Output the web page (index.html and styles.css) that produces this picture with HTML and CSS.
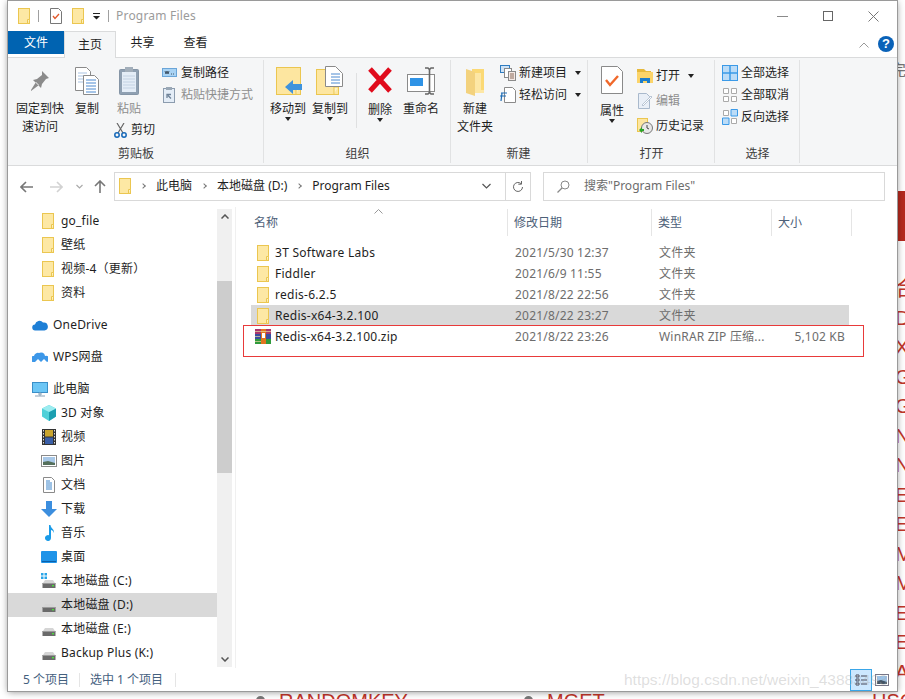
FILE: index.html
```html
<!DOCTYPE html>
<html lang="zh">
<head>
<meta charset="utf-8">
<title>Program Files</title>
<link rel="stylesheet" href="styles.css">
</head>
<body>

<svg class="defs" width="0" height="0">
  <symbol id="folder" viewBox="0 0 12 16">
    <rect x=".5" y=".5" width="11" height="15" fill="#fde8a4" stroke="#ebc650"/>
    <path d="M9.5 15.5v-4h2" fill="#fdf3c8" stroke="#ebc650"/>
  </symbol>
  <symbol id="disk" viewBox="0 0 16 16">
    <path d="M2 8l2-3h8l2 3z" fill="#d5d5d5"/>
    <rect x="1.5" y="8" width="13" height="5" fill="#6a6a6a"/>
    <rect x="1.5" y="8" width="13" height="1" fill="#9a9a9a"/>
    <rect x="11" y="10" width="2" height="1.4" fill="#4ade3a"/>
  </symbol>
</svg>

<div class="backdrop">
  <div class="backdrop-bar"></div>
  <span class="backdrop-grey">完</span>
  <div class="backdrop-letters">
    <span>合</span><span>D</span><span>X</span><span>G</span><span>G</span><span>N</span><span>N</span>
    <span>E</span><span>E</span><span>M</span><span>M</span><span>E</span><span>E</span><span>A</span>
  </div>
  <div class="backdrop-bottom">
    <i class="dot dot-1"></i><span class="word word-1">RANDOMKEY</span>
    <i class="dot dot-2"></i><span class="word word-2">MGET</span>
    <span class="word word-3">HSC</span>
  </div>
</div>

<div class="window">

  <div class="titlebar">
    <svg class="qa-folder" width="12" height="16"><use href="#folder"/></svg>
    <i class="qa-sep"></i>
    <svg class="qa-doc" width="12" height="16" viewBox="0 0 12 16">
      <path d="M.5.5h8l3 3v12h-11z" fill="#fff" stroke="#777"/>
      <path d="M3 8l2 2.500 4-4.500" fill="none" stroke="#e2582a" stroke-width="1.300"/>
    </svg>
    <svg class="qa-folder2" width="12" height="16"><use href="#folder"/></svg>
    <svg class="qa-drop" width="7" height="7" viewBox="0 0 7 7">
      <path d="M0 0h7v1H0zM0 3h7L3.500 6.500z" fill="#222"/>
    </svg>
    <i class="qa-sep"></i>
    <span class="title">Program Files</span>
    <div class="winbtns">
      <svg width="11" height="11" viewBox="0 0 11 11"><path d="M0 5.500h11" stroke="#8a8a8a"/></svg>
      <svg width="10" height="10" viewBox="0 0 10 10"><rect x=".5" y=".5" width="9" height="9" fill="none" stroke="#666"/></svg>
      <svg width="11" height="11" viewBox="0 0 11 11"><path d="M.5.500l10 10M10.500.500l-10 10" stroke="#777"/></svg>
    </div>
  </div>

  <div class="tabs">
    <div class="tab tab-file">文件</div>
    <div class="tab tab-on">主页</div>
    <div class="tab tab-share">共享</div>
    <div class="tab tab-view">查看</div>
    <svg class="collapse" width="10" height="6" viewBox="0 0 10 6"><path d="M.5 5.500L5 1l4.500 4.500" fill="none" stroke="#999"/></svg>
    <div class="help">?</div>
  </div>

  <div class="ribbon">

    <div class="group g-clip">
      <div class="group-body">
        <div class="big w-pin">
          <svg width="24" height="30" viewBox="0 0 24 30">
            <path d="M14 5l7 7-3 1-4 5-1 4-8-8 4-1 5-4zM8 16l-5 8 0 1 8-6z" fill="#8b8b8b"/>
          </svg>
          <span>固定到快<br>速访问</span>
        </div>
        <div class="big w-copy">
          <svg width="26" height="30" viewBox="0 0 26 30">
            <path d="M1.500 1.500h11l4 4v19h-15z" fill="#fff" stroke="#8a8a8a"/>
            <path d="M4 7h9M4 10h9M4 13h9M4 16h9" stroke="#a9c3e2"/>
            <path d="M9.500 9.500h11l4 4v15h-15z" fill="#fff" stroke="#8a8a8a"/>
            <path d="M12 14h10M12 17h10M12 20h10M12 23h10M12 26h10" stroke="#4d8ad0"/>
          </svg>
          <span>复制</span>
        </div>
        <div class="paste-col">
          <div class="big w-paste is-off">
            <svg width="22" height="30" viewBox="0 0 22 30">
              <rect x="1.500" y="3.500" width="19" height="25" rx="1" fill="#8fa0b2" stroke="#8595a6"/>
              <rect x="4" y="6" width="14" height="20" fill="#e4edf7"/>
              <path d="M5 10h12M5 13h12M5 16h12M5 19h12M5 22h12" stroke="#c3d2e3"/>
              <rect x="7" y="1" width="8" height="5" fill="#a2aeba"/>
            </svg>
            <span>粘贴</span>
          </div>
          <div class="small cut">
            <svg width="13" height="15" viewBox="0 0 13 15">
              <path d="M3 0l6 10M10 0L4 10" stroke="#666" stroke-width="1.200" fill="none"/>
              <circle cx="3" cy="12" r="2.200" fill="none" stroke="#1668b8" stroke-width="1.500"/>
              <circle cx="10" cy="12" r="2.200" fill="none" stroke="#1668b8" stroke-width="1.500"/>
            </svg>
            <span>剪切</span>
          </div>
        </div>
        <div class="small-col col-clip">
          <div class="small">
            <svg width="15" height="10" viewBox="0 0 15 10">
              <rect x=".5" y=".5" width="14" height="8" fill="#a9d3f4" stroke="#6aa5d8"/>
              <path d="M3 3l1 3 1-3 1 3 1-3M9 6h1M11 6h1" stroke="#2b3a4a" fill="none" stroke-width=".8"/>
            </svg>
            <span>复制路径</span>
          </div>
          <div class="small is-off">
            <svg width="15" height="16" viewBox="0 0 15 16">
              <rect x="1.500" y="1.500" width="11" height="14" fill="#e4edf7" stroke="#8c9cae"/>
              <rect x="4" y="0" width="6" height="3" fill="#9aa8b6"/>
              <path d="M5 11V7.500h4M6 8.500l3 3" stroke="#6e8298" fill="none" stroke-width="1.300"/>
            </svg>
            <span>粘贴快捷方式</span>
          </div>
        </div>
      </div>
      <div class="group-label">剪贴板</div>
    </div>

    <div class="group g-org">
      <div class="group-body">
        <div class="big w-move">
          <svg width="28" height="30" viewBox="0 0 28 30">
            <rect x="2.500" y="1.500" width="24" height="27" fill="#fde6a0" stroke="#ebc650"/>
            <path d="M22 28v-7h4" fill="#fdf3c8" stroke="#ebc650"/>
            <path d="M11 21l8-7v4h9v6h-9v4z" fill="#3f93dc"/>
          </svg>
          <span>移动到</span>
          <i class="caret"></i>
        </div>
        <div class="big w-copyto">
          <svg width="28" height="30" viewBox="0 0 28 30">
            <rect x=".5" y="3.500" width="22" height="25" fill="#fde6a0" stroke="#ebc650"/>
            <path d="M18 28v-7h4" fill="#fdf3c8" stroke="#ebc650"/>
            <path d="M9.500.500h10l7 7v13h-17z" fill="#fff" stroke="#8a8a8a"/>
            <path d="M15 8h9M15 11h9M15 14h9M15 17h9" stroke="#4d8ad0"/>
          </svg>
          <span>复制到</span>
          <i class="caret"></i>
        </div>
        <i class="inner-sep"></i>
        <div class="big w-del">
          <svg width="26" height="30" viewBox="0 0 26 30">
            <path d="M3 3l20 22M23 3L3 25" stroke="#e00b1c" stroke-width="5" fill="none"/>
          </svg>
          <span class="low">删除</span>
          <i class="caret"></i>
        </div>
        <div class="big w-ren">
          <svg width="28" height="30" viewBox="0 0 28 30">
            <rect x=".5" y="8.500" width="27" height="17" fill="#fff" stroke="#8a8a8a"/>
            <rect x="3" y="12" width="13" height="8" fill="#2f93e6"/>
            <path d="M18 2h3l1.500 1.500L24 2h3M22.500 3v24M18 28h3l1.500-1.500L24 28h3" stroke="#666" stroke-width="1.600" fill="none"/>
          </svg>
          <span>重命名</span>
        </div>
      </div>
      <div class="group-label">组织</div>
    </div>

    <div class="group g-new">
      <div class="group-body">
        <div class="big w-newf">
          <svg width="20" height="30" viewBox="0 0 20 30">
            <path d="M7 3h12v21H7z" fill="#fbd975"/>
            <path d="M1 3l9 3v24l-9-3z" fill="#f3d27e"/>
            <path d="M10 7v20h9v-3h-3v-17z" fill="#fde7a5"/>
          </svg>
          <span>新建<br>文件夹</span>
        </div>
        <div class="small-col col-new">
          <div class="small">
            <svg width="16" height="16" viewBox="0 0 16 16">
              <rect x=".5" y=".5" width="9" height="7" fill="#cfe3f6" stroke="#2f7cc0"/>
              <rect x="4.500" y="3.500" width="7" height="9" fill="#fff" stroke="#8a8a8a"/>
              <rect x="8.500" y="6.500" width="7" height="9" fill="#f4e9e4" stroke="#8a8a8a"/>
              <path d="M10 9h4M10 11h4M10 13h4" stroke="#8a6a5a"/>
            </svg>
            <span>新建项目</span><i class="caret caret-side"></i>
          </div>
          <div class="small">
            <svg width="16" height="16" viewBox="0 0 16 16">
              <path d="M4.500.500h8l3 3v12h-11z" fill="#fff" stroke="#8a8a8a"/>
              <path d="M1 6h6M0 9h6M2 6l-1 8" stroke="#1f6db5" stroke-width="1.200" fill="none"/>
            </svg>
            <span>轻松访问</span><i class="caret caret-side"></i>
          </div>
        </div>
      </div>
      <div class="group-label label-new">新建</div>
    </div>

    <div class="group g-open">
      <div class="group-body">
        <div class="big w-prop">
          <svg width="22" height="30" viewBox="0 0 22 30">
            <path d="M.5.500h16l5 5v22h-21z" fill="#fff" stroke="#8a8a8a"/>
            <path d="M5 14l4 5 8-9" fill="none" stroke="#f0682a" stroke-width="2.400"/>
          </svg>
          <span class="lower">属性</span>
          <i class="caret"></i>
        </div>
        <div class="small-col col-open">
          <div class="small">
            <svg width="16" height="14" viewBox="0 0 16 14">
              <path d="M0 0h7l2 2h5v2H0z" fill="#e6b93c"/>
              <path d="M0 3h16v11H0z" fill="#fbd46a"/>
              <path d="M3 14V9h10v5h-3v-2H6v2z" fill="#1d7dcb"/>
            </svg>
            <span>打开</span><i class="caret caret-side"></i>
          </div>
          <div class="small is-off">
            <svg width="16" height="16" viewBox="0 0 16 16">
              <path d="M1.500.500h8l3 3v12h-11z" fill="#e9eff7" stroke="#a9b9cc"/>
              <path d="M5 12l9-9 1 1-9 9z" fill="#fff" stroke="#a9b9cc" stroke-width=".8"/>
            </svg>
            <span>编辑</span>
          </div>
          <div class="small">
            <svg width="16" height="16" viewBox="0 0 16 16">
              <rect x=".5" y=".5" width="10" height="13" fill="#fde6a0" stroke="#ebc650"/>
              <circle cx="10" cy="10" r="5.500" fill="#e8e8e8" stroke="#777"/>
              <path d="M10 7v3l2 1" stroke="#444" fill="none"/>
              <path d="M2 12l3-3v2h2v2H5v2z" fill="#2aa52a"/>
            </svg>
            <span>历史记录</span>
          </div>
        </div>
      </div>
      <div class="group-label">打开</div>
    </div>

    <div class="group g-sel">
      <div class="group-body">
        <div class="small-col col-sel">
          <div class="small">
            <svg width="16" height="16" viewBox="0 0 16 16">
              <rect x=".5" y=".5" width="15" height="15" fill="#bcdcf7" stroke="#3b9ae8"/>
              <path d="M8 0v16M0 8h16" stroke="#3b9ae8" stroke-width="1.500"/>
            </svg>
            <span>全部选择</span>
          </div>
          <div class="small">
            <svg width="16" height="16" viewBox="0 0 16 16">
              <path d="M1.500 1.500h5v5h-5zM9.500 1.500h5v5h-5zM1.500 9.500h5v5h-5zM9.500 9.500h5v5h-5z" fill="#fff" stroke="#aaa"/>
            </svg>
            <span>全部取消</span>
          </div>
          <div class="small">
            <svg width="16" height="16" viewBox="0 0 16 16">
              <path d="M1.500 1.500h5v5h-5zM9.500 9.500h5v5h-5z" fill="#fff" stroke="#aaa"/>
              <path d="M9 .5h6.500V7H9zM.5 9H7v6.500H.5z" fill="#bcdcf7" stroke="#3b9ae8"/>
            </svg>
            <span>反向选择</span>
          </div>
        </div>
      </div>
      <div class="group-label">选择</div>
    </div>
  </div>

  <div class="addressbar">
    <svg class="nav-back" width="13" height="12" viewBox="0 0 13 12"><path d="M6 1L1 6l5 5M1 6h12" fill="none" stroke="#777" stroke-width="1.600"/></svg>
    <svg class="nav-fwd" width="13" height="12" viewBox="0 0 13 12"><path d="M7 1l5 5-5 5M12 6H0" fill="none" stroke="#d2d2d2" stroke-width="1.600"/></svg>
    <svg class="nav-down" width="7" height="5" viewBox="0 0 7 5"><path d="M.5 1l3 3 3-3" fill="none" stroke="#aaa" stroke-width="1.200"/></svg>
    <svg class="nav-up" width="12" height="13" viewBox="0 0 12 13"><path d="M1 6l5-5 5 5M6 1v12" fill="none" stroke="#777" stroke-width="1.600"/></svg>
    <div class="path">
      <svg class="path-folder" width="12" height="16"><use href="#folder"/></svg>
      <i class="crumb-sep"></i><span>此电脑</span>
      <i class="crumb-sep"></i><span>本地磁盘 (D:)</span>
      <i class="crumb-sep"></i><span>Program Files</span>
      <svg class="path-drop" width="9" height="6" viewBox="0 0 9 6"><path d="M.5 1l4 4 4-4" fill="none" stroke="#555" stroke-width="1.200"/></svg>
    </div>
    <div class="refresh">
      <svg width="12" height="12" viewBox="0 0 12 12"><path d="M10.500 6A4.500 4.500 0 1 1 9 2.600M9.500 0v3.200H6.300" fill="none" stroke="#666"/></svg>
    </div>
    <div class="search">
      <svg width="13" height="13" viewBox="0 0 13 13"><circle cx="8" cy="5" r="4" fill="none" stroke="#888"/><path d="M5 8l-4.500 4.500" stroke="#888" stroke-width="1.300"/></svg>
      <span>搜索"Program Files"</span>
    </div>
  </div>

  <div class="main">
    <div class="nav">
      <div class="nav-row sub"><svg class="nf" width="12" height="16"><use href="#folder"/></svg><span>go_file</span></div>
      <div class="nav-row sub"><svg class="nf" width="12" height="16"><use href="#folder"/></svg><span>壁纸</span></div>
      <div class="nav-row sub"><svg class="nf" width="12" height="16"><use href="#folder"/></svg><span>视频-4（更新）</span></div>
      <div class="nav-row sub"><svg class="nf" width="12" height="16"><use href="#folder"/></svg><span>资料</span></div>

      <div class="nav-row top gap">
        <svg width="16" height="12" viewBox="0 0 16 12"><path d="M3.500 11.500a3 3 0 0 1-.5-6A4.500 4.500 0 0 1 11 3.500a3.500 3.500 0 0 1 1.500 8z" fill="#1e7fd6"/></svg>
        <span>OneDrive</span>
      </div>
      <div class="nav-row top gap">
        <svg width="16" height="12" viewBox="0 0 16 12"><path d="M1 11a3 3 0 0 1 1-6 4 4 0 0 1 5-3 4 4 0 0 1 6 3 3 3 0 0 1 2 6l-3-3-3 3-3-3-3 3z" fill="#3c97e8"/></svg>
        <span>WPS网盘</span>
      </div>
      <div class="nav-row top gap">
        <svg width="16" height="15" viewBox="0 0 16 15"><rect x=".5" y=".5" width="15" height="10" fill="#6cc6f5" stroke="#3a8fc8"/><path d="M7 11h2v2H7zM3 14h10" stroke="#8aa3b8" fill="none"/></svg>
        <span>此电脑</span>
      </div>
      <div class="nav-row sub">
        <svg width="16" height="16" viewBox="0 0 16 16"><path d="M8 0l7 3.500v8L8 16l-7-4.500v-8z" fill="#4fd0d8"/><path d="M8 7l7-3.500v8L8 16z" fill="#1c9fb0"/><path d="M8 0l7 3.500L8 7 1 3.500z" fill="#9cecf0"/></svg>
        <span>3D 对象</span>
      </div>
      <div class="nav-row sub">
        <svg width="16" height="16" viewBox="0 0 16 16"><rect x="1" y="0" width="14" height="16" fill="#333"/><rect x="4" y="1" width="8" height="6.500" fill="#c9a52e"/><rect x="4" y="8.500" width="8" height="6.500" fill="#3a5fa8"/><path d="M2.500 1v14M13.500 1v14" stroke="#ddd" stroke-dasharray="1.500 1.500"/></svg>
        <span>视频</span>
      </div>
      <div class="nav-row sub">
        <svg width="16" height="14" viewBox="0 0 16 14"><rect x=".5" y="1.500" width="15" height="11" fill="#fff" stroke="#8a8a8a"/><rect x="2" y="3" width="12" height="8" fill="#a8c8e8"/><path d="M2 11V8l5-1 7 2v2z" fill="#55705c"/></svg>
        <span>图片</span>
      </div>
      <div class="nav-row sub">
        <svg width="16" height="16" viewBox="0 0 16 16"><path d="M2.500.500h8l3 3v12h-11z" fill="#fff" stroke="#8a8a8a"/><path d="M5 4h4M5 6h6M5 8h6M5 10h6M5 12h6" stroke="#3c86cc"/></svg>
        <span>文档</span>
      </div>
      <div class="nav-row sub">
        <svg width="16" height="16" viewBox="0 0 16 16"><path d="M5 0h6v8h5l-8 8-8-8h5z" fill="#3c8ede"/></svg>
        <span>下载</span>
      </div>
      <div class="nav-row sub">
        <svg width="16" height="16" viewBox="0 0 16 16"><path d="M8 0h1.500c0 3 4 4 3.500 8-.5-2-2-3-3-3v8a3 3 0 1 1-2-2.800z" fill="#1a9be8"/></svg>
        <span>音乐</span>
      </div>
      <div class="nav-row sub">
        <svg width="16" height="14" viewBox="0 0 16 14"><rect x="0" y="1" width="16" height="12" rx="1" fill="#1e93e8"/><path d="M1 11.500h14" stroke="#0c5fa8"/></svg>
        <span>桌面</span>
      </div>
      <div class="nav-row sub">
        <svg width="16" height="16" viewBox="0 0 16 16"><path d="M0 0h2.500v2.500H0zM3.500 0H6v2.500H3.500zM0 3.500h2.500V6H0zM3.500 3.500H6V6H3.500z" fill="#2aa5e8"/><use href="#disk" y="2"/></svg>
        <span>本地磁盘 (C:)</span>
      </div>
      <div class="nav-row sub is-on"><svg width="16" height="16"><use href="#disk" y="2"/></svg><span>本地磁盘 (D:)</span></div>
      <div class="nav-row sub"><svg width="16" height="16"><use href="#disk" y="2"/></svg><span>本地磁盘 (E:)</span></div>
      <div class="nav-row sub"><svg width="16" height="16"><use href="#disk" y="2"/></svg><span>Backup Plus (K:)</span></div>
    </div>

    <div class="scroll">
      <svg class="scroll-arrow" width="8" height="5" viewBox="0 0 8 5"><path d="M.5 4.500L4 1l3.500 3.500" fill="none" stroke="#555" stroke-width="1.500"/></svg>
      <div class="thumb"></div>
      <svg class="scroll-arrow arrow-end" width="8" height="5" viewBox="0 0 8 5"><path d="M.5.500L4 4 7.500.500" fill="none" stroke="#555" stroke-width="1.500"/></svg>
    </div>

    <div class="files">
      <div class="file-head">
        <div class="hcell h-name">名称
          <svg class="sort" width="9" height="5" viewBox="0 0 9 5"><path d="M.5 4.500l4-4 4 4" fill="none" stroke="#999"/></svg>
        </div>
        <div class="hcell h-date">修改日期</div>
        <div class="hcell h-type">类型</div>
        <div class="hcell h-size">大小</div>
      </div>
      <div class="file-row">
        <div class="f-name"><svg width="12" height="16"><use href="#folder"/></svg>3T Software Labs</div>
        <div class="f-meta">2021/5/30 12:37</div><div class="f-meta">文件夹</div><div></div>
      </div>
      <div class="file-row">
        <div class="f-name"><svg width="12" height="16"><use href="#folder"/></svg>Fiddler</div>
        <div class="f-meta">2021/6/9 11:55</div><div class="f-meta">文件夹</div><div></div>
      </div>
      <div class="file-row">
        <div class="f-name"><svg width="12" height="16"><use href="#folder"/></svg>redis-6.2.5</div>
        <div class="f-meta">2021/8/22 22:56</div><div class="f-meta">文件夹</div><div></div>
      </div>
      <div class="file-row is-on">
        <div class="f-name"><svg width="12" height="16"><use href="#folder"/></svg>Redis-x64-3.2.100</div>
        <div class="f-meta">2021/8/22 23:27</div><div class="f-meta">文件夹</div><div></div>
      </div>
      <div class="file-row">
        <div class="f-name rar">
          <svg width="16" height="15" viewBox="0 0 16 15">
            <rect x="0" y="0" width="16" height="5" fill="#a8366c"/>
            <rect x="0" y="5" width="16" height="5" fill="#3b4da0"/>
            <rect x="0" y="10" width="16" height="5" fill="#2f9a3c"/>
            <rect x="6" y="0" width="5" height="15" fill="#e2741f"/>
            <rect x="7" y="4" width="3" height="5" fill="#fff"/>
            <path d="M0 2.500h16M0 7.500h5M0 12.500h6" stroke="#e8d9a0" stroke-width=".7"/>
          </svg>
          Redis-x64-3.2.100.zip
        </div>
        <div class="f-meta">2021/8/22 23:26</div><div class="f-meta">WinRAR ZIP 压缩...</div><div class="f-meta f-size">5,102 KB</div>
      </div>
      <div class="mark"></div>
    </div>
  </div>

  <div class="statusbar">
    <span class="stat stat-1">5 个项目</span>
    <span class="stat stat-2">选中 1 个项目</span>
    <div class="views">
      <div class="view-btn is-on">
        <svg width="14" height="14" viewBox="0 0 14 14"><path d="M2 2h3v2H2zM2 6h3v2H2zM2 10h3v2H2zM7 3h6M7 7h6M7 11h6" fill="none" stroke="#445" stroke-width="1"/></svg>
      </div>
      <div class="view-btn">
        <svg width="14" height="12" viewBox="0 0 14 12"><rect x=".5" y=".5" width="13" height="11" fill="#fff" stroke="#778"/><rect x="2" y="2" width="10" height="8" fill="#9cc3e8"/><path d="M2 10V7l4-1 6 2v2z" fill="#456"/></svg>
      </div>
    </div>
  </div>
</div>

<div class="watermark">https://blog.csdn.net/weixin_43883493</div>

</body>
</html>
```

FILE: styles.css
```css
* { box-sizing: border-box; }
html, body { margin: 0; height: 100%; }
body {
  width: 905px; height: 699px; overflow: hidden; position: relative; background: #fff;
  font-family: "Noto Sans", "Noto Sans CJK SC", sans-serif; font-size: 12px; color: #1e1e1e; line-height: 18px;
}
svg { display: block; flex: none; }
.defs { position: absolute; }
i { display: block; font-style: normal; }

/* what shows around the window */
.backdrop { position: absolute; inset: 0; overflow: hidden; font-family: "Liberation Sans", "Noto Sans CJK SC", sans-serif; color: #c2362b; }
.backdrop-bar { position: absolute; left: 890px; top: 191px; width: 15px; height: 50px; background: #b5291e; }
.backdrop-grey { position: absolute; left: 890px; top: 62px; font-size: 16px; color: #777; }
.backdrop-letters { position: absolute; left: 895px; top: 276px; display: flex; flex-direction: column; gap: 5.500px; font-size: 21px; line-height: 24px; }
.backdrop-bottom { position: absolute; left: 0; right: 0; bottom: 0; height: 8px; }
.word { position: absolute; top: -1px; font-size: 20px; line-height: 23px; }
.word-1 { left: 279px; }
.word-2 { left: 547px; }
.word-3 { left: 872px; }
.dot { position: absolute; top: 5px; width: 9px; height: 9px; border-radius: 50%; background: #777; }
.dot-1 { left: 256px; }
.dot-2 { left: 524px; }

.window {
  position: relative; margin: 1px 0 0 8px; width: 889px; height: 690px; background: #fff;
  display: flex; flex-direction: column;
  box-shadow: 0 0 0 1px #9a9a9a, 0 1px 7px rgba(0, 0, 0, .45);
}

/* title bar */
.titlebar { height: 30px; flex: none; display: flex; align-items: center; padding-left: 10px; }
.qa-sep { width: 1px; height: 12px; background: #a0a0a0; margin-left: 8px; }
.qa-doc { margin-left: 11px; }
.qa-folder2 { margin-left: 10px; }
.qa-drop { margin-left: 9px; }
.title { margin-left: 7px; color: #9b9b9b; letter-spacing: .2px; }
.winbtns { margin-left: auto; display: flex; align-items: center; padding-right: 18px; gap: 35px; }

/* tabs */
.tabs { height: 27px; flex: none; display: flex; position: relative; border-bottom: 1px solid #dadbdc; }
.tab { display: flex; align-items: center; justify-content: center; height: 23px; }
.tab-file { width: 56px; background: #0063b1; color: #fff; }
.tab-on { width: 52px; height: 27px; background: #f5f6f7; border: 1px solid #dadbdc; border-bottom: 0; z-index: 1; }
.tab-share { width: 53px; }
.tab-view { width: 53px; }
.collapse { position: absolute; left: 851px; top: 11px; }
.help {
  position: absolute; left: 870px; top: 5px; width: 16px; height: 16px; border-radius: 50%;
  background: #0a62b8; color: #fff; font: bold 13px/16px "Liberation Sans", sans-serif; text-align: center;
}

/* ribbon */
.ribbon { height: 108px; flex: none; display: flex; background: #f5f6f7; border-bottom: 1px solid #dadbdc; }
.group { display: flex; flex-direction: column; position: relative; height: 107px; }
.group::after { content: ""; position: absolute; right: 0; top: 2px; bottom: 2px; width: 1px; background: #e1e2e3; }
.g-clip { width: 256px; }
.g-org { width: 187px; }
.g-new { width: 137px; }
.g-open { width: 127px; }
.g-sel { width: 85px; }
.group-body { flex: 1; display: flex; align-items: flex-start; min-height: 0; }
.group-label { height: 18px; margin-bottom: 2px; text-align: center; color: #3c3c3c; }
.label-new { padding-right: 2px; }

.big { display: flex; flex-direction: column; align-items: center; text-align: center; padding-top: 8px; }
.big > span { margin-top: 4px; }
.big > .low { margin-top: 5px; }
.big > .lower { margin-top: 6px; }
.is-off { color: #8e8e8e; }
.caret { width: 0; height: 0; border: 3px solid transparent; border-top: 4px solid #222; border-bottom: 0; margin-top: -1px; }
.caret-side { margin: 0 0 0 5px; }
.inner-sep { width: 1px; height: 55px; margin: 15px 0 0 5px; background: #dfe0e1; }

.w-pin { width: 48px; margin-left: 8px; }
.w-copy { width: 46px; }
.paste-col { width: 52px; display: flex; flex-direction: column; }
.w-paste { width: 38px; }
.cut { margin: 1px 0 0 4px; }
.col-clip { padding-top: 4px; margin-left: 0; }
.small { height: 22px; display: flex; align-items: center; gap: 4px; white-space: nowrap; }
.small-col { display: flex; flex-direction: column; padding-top: 4px; }

.w-move { width: 42px; margin-left: 3px; }
.w-copyto { width: 42px; }
.w-del { width: 44px; }
.w-ren { width: 38px; }
.w-del { margin-left: 1px; }

.w-newf { width: 48px; }
.col-new { margin-left: 1px; }
.col-new .small { gap: 3px; }

.w-prop { width: 48px; }
.col-open { margin-left: 1px; padding-top: 5px; }
.col-open .small { height: 25px; gap: 3px; }

.col-sel { margin-left: 7px; }
.col-sel .small { gap: 3px; }

/* address bar */
.addressbar { height: 41px; flex: none; display: flex; align-items: center; }
.nav-back { margin-left: 12px; }
.nav-fwd { margin-left: 17px; }
.nav-down { margin-left: 13px; }
.nav-up { margin-left: 11px; }
.path {
  margin-left: 8px; width: 391px; height: 29px; display: flex; align-items: center; padding: 0 0 1px 4px;
  border: 1px solid #d9d9d9; border-right: 0;
}
.crumb-sep { width: 4px; height: 4px; border: solid #777; border-width: 1px 1px 0 0; transform: rotate(45deg); margin: 0 11px 0 10px; }
.path-drop { margin-left: auto; margin-right: 14px; }
.refresh { width: 26px; height: 29px; border: 1px solid #d9d9d9; display: flex; align-items: center; justify-content: center; }
.search {
  margin-left: 12px; width: 342px; height: 29px; border: 1px solid #d9d9d9;
  display: flex; align-items: center; padding: 0 0 1px 13px; gap: 14px; color: #6d6d6d;
}

/* main area */
.main { flex: 1; min-height: 0; display: flex; }
.nav { width: 209px; flex: none; padding-top: 2px; overflow: hidden; }
.nav-row { height: 24px; display: flex; align-items: center; white-space: nowrap; letter-spacing: .2px; }
.sub { padding-left: 33px; gap: 4px; }
.sub > svg { width: 16px; }
.sub > .nf { width: 12px; margin: 0 3px 0 1px; }
.top { padding-left: 24px; gap: 5px; }
.gap { margin-top: 8px; }
.nav-row.is-on { background: #d9d9d9; }

.scroll { width: 15px; flex: none; background: #f0f0f0; margin: 2px 0 1px; display: flex; flex-direction: column; align-items: center; }
.scroll-arrow { margin-top: 5px; }
.thumb { width: 15px; height: 192px; margin-top: 62px; background: #cdcdcd; }
.arrow-end { margin-top: auto; margin-bottom: 5px; }

.files { flex: 1; position: relative; padding: 2px 0 0 15px; border-left: 1px solid #f0f0f0; margin-left: 3px; }
.file-head { display: grid; grid-template-columns: 257px 144px 120px 80px; height: 27px; margin-bottom: 6px; color: #4d6078; }
.hcell { position: relative; display: flex; align-items: center; padding-left: 6px; border-right: 1px solid #e5e5e5; }
.h-name { padding-left: 3px; }
.sort { position: absolute; left: 123px; top: 0; }
.file-row { display: grid; grid-template-columns: 257px 144px 120px 77px; height: 21px; width: 598px; align-items: center; }
.file-row.is-on { background: #d9d9d9; }
.f-name { display: flex; align-items: center; gap: 6px; padding-left: 6px; letter-spacing: .27px; white-space: nowrap; }
.f-name.rar { padding-left: 4px; gap: 4px; letter-spacing: .2px; }
.f-meta { padding-left: 7px; color: #6d6d6d; white-space: nowrap; letter-spacing: .2px; }
.f-size { text-align: right; padding: 0 4px 0 0; }
.mark { position: absolute; left: 7px; top: 118px; width: 621px; height: 32px; border: 1px solid #e83a3a; }

/* status bar */
.statusbar { height: 23px; flex: none; display: flex; align-items: center; padding-left: 15px; color: #44607e; }
.stat { border-right: 1px solid #e5e5e5; height: 14px; display: flex; align-items: center; }
.stat-1 { width: 57px; }
.stat-2 { width: 96px; padding-left: 10px; }
.views { margin-left: auto; display: flex; gap: 3px; padding-right: 8px; align-items: center; }
.view-btn { width: 22px; height: 22px; display: flex; align-items: center; justify-content: center; }
.view-btn.is-on { background: #cce8ff; border: 1px solid #3aa6e8; }
.view-btn:last-child { width: 14px; }

.watermark {
  position: absolute; left: 624px; top: 670px; white-space: nowrap;
  font: 15.500px/20px "Liberation Sans", sans-serif; color: rgba(170, 170, 170, .38);
}
```
